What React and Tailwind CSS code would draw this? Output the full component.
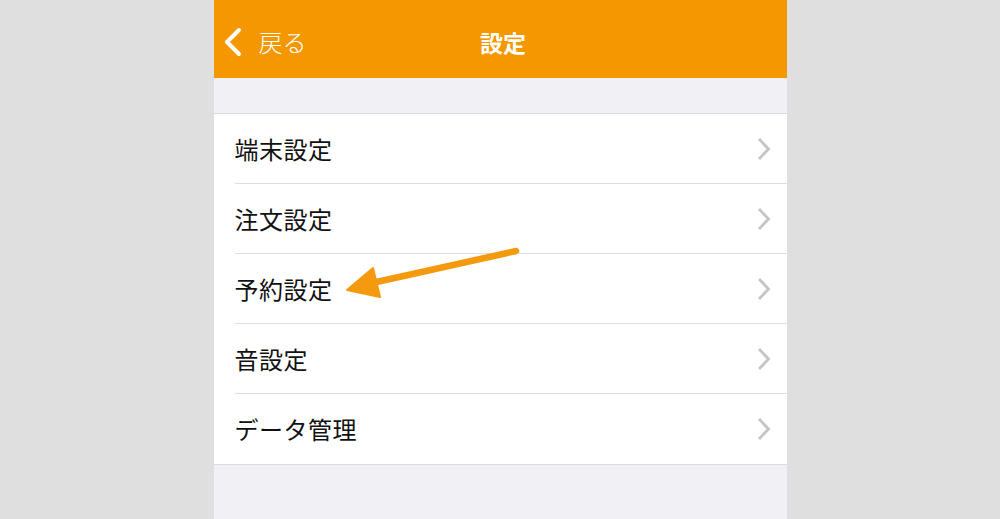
import React from "react";

const items = ["端末設定", "注文設定", "予約設定", "音設定", "データ管理"];

function Chevron() {
  return (
    <svg width="14" height="22" viewBox="0 0 14 22" className="shrink-0">
      <path d="M3 2 L11.5 11 L3 20" fill="none" stroke="#c5c5c9" strokeWidth="2.8" strokeLinecap="square" strokeLinejoin="miter" />
    </svg>
  );
}

export default function App() {
  return (
    <div
      className="relative w-full h-[519px] bg-[#dfdfdf] flex justify-center overflow-hidden"
      style={{ fontFamily: '"Noto Sans CJK JP", "Noto Sans", sans-serif' }}
    >
      <div className="w-[573px] h-full bg-[#f0f0f5] flex flex-col">
        <div className="relative h-[78px] bg-[#f59700] flex items-center pt-[6px]">
          <div className="flex items-center pl-[8px] gap-[15px]">
            <svg width="22" height="30" viewBox="0 0 22 30">
              <path d="M17 3 L5 15 L17 27" fill="none" stroke="#ffffff" strokeWidth="4" strokeLinecap="round" strokeLinejoin="round" />
            </svg>
            <span className="text-white text-[24px] font-light leading-none">戻る</span>
          </div>
          <div className="absolute inset-0 pt-[6px] flex items-center justify-center pointer-events-none">
            <span className="text-white text-[23px] font-bold leading-none ml-[6px]">設定</span>
          </div>
        </div>
        <div className="h-[35px]" />
        <div className="bg-white border-t border-b border-[#dcdce0]">
          {items.map((t, i) => (
            <div key={t} className="pl-[21px]">
              <div
                className={
                  "h-[70px] flex items-center justify-between pr-[16px] " +
                  (i < items.length - 1 ? "border-b border-[#dedee2]" : "")
                }
              >
                <span className="text-[24px] text-[#111111] leading-none tracking-[0.5px]">{t}</span>
                <Chevron />
              </div>
            </div>
          ))}
        </div>
      </div>
      <svg className="absolute left-0 top-0 pointer-events-none" width="1000" height="519" viewBox="0 0 1000 519">
        <line x1="516" y1="251" x2="372" y2="283" stroke="#f59a0f" strokeWidth="6.5" strokeLinecap="round" />
        <polygon points="347,290 373,268 380,297" fill="#f59a0f" stroke="#f59a0f" strokeWidth="2" strokeLinejoin="round" />
      </svg>
    </div>
  );
}
